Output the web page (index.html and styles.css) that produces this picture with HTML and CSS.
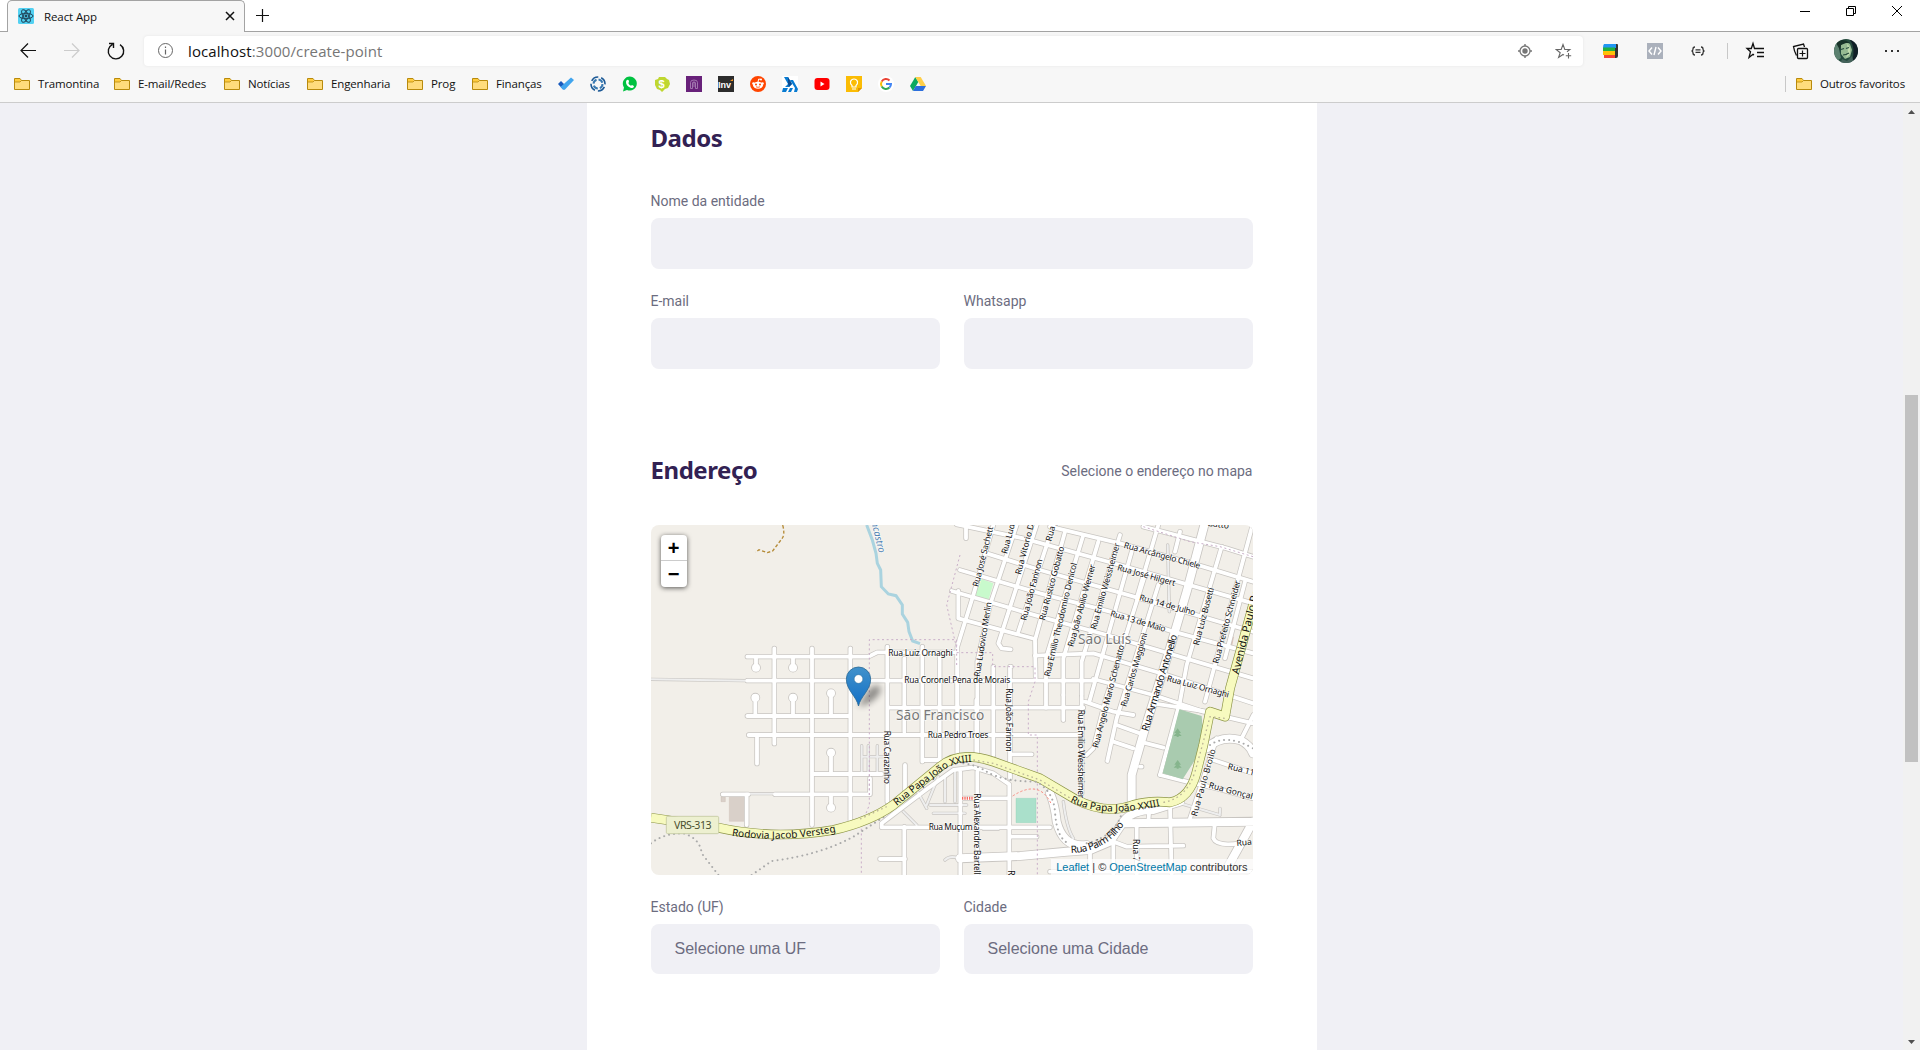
FILE: index.html
```html
<!DOCTYPE html>
<html lang="pt-BR">
<head>
<meta charset="utf-8">
<title>React App</title>
<link rel="stylesheet" href="styles.css">
</head>
<body>
<svg class="defs" aria-hidden="true">
  <symbol id="folder" viewBox="0 0 16 12"><path d="M.5 11.500V.5H6l1.500 2h8v9z" fill="#ffdc7c" stroke="#b88a0c"/><path d="M1 1h4.700l1.200 2L6 4H1z" fill="#ffcb3d"/><path d="M.5 4H6l1.500-1.500" fill="none" stroke="#b88a0c" stroke-width=".8"/></symbol>
</svg>
<header class="browser">
  <div class="tabs">
    <div class="tab">
      <svg width="16" height="16" viewBox="0 0 16 16"><rect width="16" height="16" rx="1.500" fill="#53d1f2"/><g fill="none" stroke="#20455a" stroke-width="1"><ellipse cx="8" cy="8" rx="7" ry="2.700"/><ellipse cx="8" cy="8" rx="7" ry="2.700" transform="rotate(60 8 8)"/><ellipse cx="8" cy="8" rx="7" ry="2.700" transform="rotate(120 8 8)"/></g><circle cx="8" cy="8" r="1.400" fill="#20455a"/></svg>
      <span class="tab-title">React App</span>
      <svg class="tab-close" width="10" height="10" viewBox="0 0 10 10"><path d="M1 1l8 8M9 1L1 9" stroke="#111" stroke-width="1.500"/></svg>
    </div>
    <svg class="newtab" width="13" height="13" viewBox="0 0 13 13"><path d="M6.500 0v13M0 6.500h13" stroke="#111" stroke-width="1.200"/></svg>
    <div class="window">
      <svg width="46" height="22" viewBox="0 0 46 22"><path d="M18 11.500h10" stroke="#000"/></svg>
      <svg width="46" height="22" viewBox="0 0 46 22"><path d="M18.500 8.500h7v7h-7zM20.500 8V6.500h7v7H26" fill="none" stroke="#000"/></svg>
      <svg width="46" height="22" viewBox="0 0 46 22"><path d="M18 6l10 10M28 6L18 16" stroke="#000"/></svg>
    </div>
  </div>
  <div class="toolbar">
    <svg class="nav" viewBox="0 0 44 30"><path d="M30 14.500H15M22 7.500l-7 7 7 7" fill="none" stroke="#111" stroke-width="1.200"/></svg>
    <svg class="nav" viewBox="0 0 44 30"><path d="M14 14.500h15M22 7.500l7 7-7 7" fill="none" stroke="#ccc" stroke-width="1.200"/></svg>
    <svg class="nav" viewBox="0 0 44 30"><path d="M18.500 8.300a7.700 7.700 0 1 0 7.500.3M15 7.500h4.500V12" fill="none" stroke="#111" stroke-width="1.400"/></svg>
    <div class="address">
      <svg width="16" height="16" viewBox="0 0 16 16"><circle cx="8.500" cy="7.500" r="7" fill="none" stroke="#666"/><path d="M8.500 6.500v5M8.500 3.500v1.400" stroke="#666" stroke-width="1.200"/></svg>
      <span class="url"><b>localhost</b>:3000/create-point</span>
      <svg class="locate" width="16" height="16" viewBox="0 0 16 16"><circle cx="8" cy="8" r="5" fill="none" stroke="#777" stroke-width="1.300"/><circle cx="8" cy="8" r="2.700" fill="#777"/><path d="M8 1v2M8 13v2M1 8h2M13 8h2" stroke="#777" stroke-width="1.400"/></svg>
      <svg width="18" height="16" viewBox="0 0 18 16"><path d="M12 8.700L14.800 6.500H9.800L8 1.500 6.200 6.500H1.200l4 3.200L3.600 14.500 8 11.500l1 .6M13.500 10v5.500M10.800 12.800h5.400" fill="none" stroke="#666" stroke-width="1.100"/></svg>
    </div>
    <div class="tools">
      <svg viewBox="0 0 45 30"><path d="M27 8h3q1 0 1 1v11q0 2-2 2h-2z" fill="#333"/><path d="M17 8h12v4H16q0-3 1-4z" fill="#2196f3"/><path d="M16 11.500h12V15H16z" fill="#1fb141"/><path d="M16 15h12v4H16z" fill="#ffc107"/><path d="M17 19h11v3H17z" fill="#f44336"/></svg>
      <svg viewBox="0 0 45 30"><path d="M15 7h16v16H15z" fill="#abb1bc"/><path d="M20 11.500L17 15l3 3.500M26 11.500l3 3.500-3 3.500M24 11l-2 8" fill="none" stroke="#fff" stroke-width="1.400"/></svg>
      <svg viewBox="0 0 45 30"><path d="M18 11q-2 0-2 2t-1.500 2q1.500 0 1.500 2t2 2M24 11q2 0 2 2t1.500 2q-1.500 0-1.500 2t-2 2" fill="none" stroke="#333" stroke-width="1.300"/><path d="M18.500 13.800h5M18.500 16.300h5" stroke="#333" stroke-width="1.300"/></svg>
      <i class="rule"></i>
      <svg viewBox="0 0 45 30"><path d="M24 12.500h-2.500L20 7.500l-1.700 5H14l3.500 3.200L16 21.500l4-3.200 1 .6M23 12.500h8M24 16.500h7M24 20.500h7" fill="none" stroke="#111" stroke-width="1.300"/></svg>
      <svg viewBox="0 0 45 30"><path d="M18.500 19.500q-2.500-5-3-9l10-2.500 1 3" fill="none" stroke="#111" stroke-width="1.300"/><rect x="19.500" y="12.500" width="10" height="10" rx="1" fill="#f7f7f7" stroke="#111" stroke-width="1.300"/><path d="M24.500 14.500v6M21.500 17.500h6" stroke="#111" stroke-width="1.200"/></svg>
      <svg viewBox="0 0 45 30"><defs><clipPath id="av"><circle cx="23" cy="15" r="12"/></clipPath></defs><g clip-path="url(#av)"><path d="M11 3h24v24H11z" fill="#254b3e"/><path d="M11 3h7l-2 10 2 9-7 5z" fill="#5c8170"/><path d="M18 9q4-5 9-1l2 6-2 7-5 2-4-5z" fill="#96ba92"/><path d="M24 8q4 2 3 10l-4 4 2-6z" fill="#c0dbae"/><path d="M18 13.500l3-1M23 12.500l3-1M20 19q3 0 6-2" stroke="#284d3e" stroke-width="1.200"/><path d="M27 4q6 8 2 21h6V3z" fill="#111f27"/><path d="M13 7q6-6 14 0l-4 0-5 2-1 5z" fill="#183329"/><path d="M19 23l5 2 5-5 2 8H17z" fill="#45635b"/></g></svg>
      <svg viewBox="0 0 45 30"><path d="M17 14h2v2h-2zM23 14h2v2h-2zM29 14h2v2h-2z" fill="#333"/></svg>
    </div>
  </div>
  <div class="bookmarks">
    <span class="bm"><svg width="16" height="12"><use href="#folder"/></svg>Tramontina</span>
    <span class="bm"><svg width="16" height="12"><use href="#folder"/></svg>E-mail/Redes</span>
    <span class="bm"><svg width="16" height="12"><use href="#folder"/></svg>Notícias</span>
    <span class="bm"><svg width="16" height="12"><use href="#folder"/></svg>Engenharia</span>
    <span class="bm"><svg width="16" height="12"><use href="#folder"/></svg>Prog</span>
    <span class="bm"><svg width="16" height="12"><use href="#folder"/></svg>Finanças</span>
    <svg viewBox="0 0 16 16"><path d="M0 8l3-3 5 5-3 3.500z" fill="#185abd"/><path d="M5 13.500L2.500 11 13 1.500l3 2.500-9 9.500q-1 .8-2 0z" fill="#41a5ee"/></svg>
    <svg viewBox="0 0 16 16"><circle cx="8" cy="8" r="7" fill="none" stroke="#1d5a96" stroke-width="1.600" stroke-dasharray="8 3" transform="rotate(25 8 8)"/><circle cx="8" cy="8" r="4.500" fill="none" stroke="#397ab2" stroke-width="2" stroke-dasharray="5 2.070"/></svg>
    <svg viewBox="0 0 16 16"><path d="M1 15.500l1-4A7 7 0 1 1 5 14z" fill="#00c241"/><path d="M5 4q2-1 2 2l-.7 1Q7 9 9 9.700L10 9q2 .6 2 1.500Q11 13 8 11.500 4 9.500 4 6q0-1.500 1-2z" fill="#fff"/></svg>
    <svg viewBox="0 0 16 16"><path d="M1 4l3-1 1-2h6l2 2 2 1 1 4-2 4-3 1-3 3-2-2-3-1-2-4z" fill="#bfd730"/><text x="4.500" y="11.500" class="dollar">$</text></svg>
    <svg viewBox="0 0 16 16"><path d="M0 0h16v16H0z" fill="#68217a"/><path d="M4.500 12.500V6.500q0-2.500 3.500-2.500t3.500 2.500v6h-2V7q0-1-1.500-1T6.500 7v5.500zM8 6v5" fill="none" stroke="#b08cbb" stroke-width=".8"/></svg>
    <svg viewBox="0 0 16 16"><path d="M0 0h16v16H0z" fill="#2c2c2c"/><text x="0" y="12" class="inv">Inv</text><path d="M12 5l3-2v2z" fill="#f7931e"/></svg>
    <svg viewBox="0 0 16 16"><circle cx="8" cy="8" r="8" fill="#ff4500"/><ellipse cx="8" cy="9.300" rx="5" ry="3.500" fill="#fff"/><circle cx="3.500" cy="7.500" r="1.300" fill="#fff"/><circle cx="12.500" cy="7.500" r="1.300" fill="#fff"/><circle cx="11" cy="3.500" r="1" fill="#fff"/><path d="M8 6l.7-3 2.300.5" stroke="#fff" fill="none"/><circle cx="6" cy="8.500" r="1" fill="#ff4500"/><circle cx="10" cy="8.500" r="1" fill="#ff4500"/><path d="M6 10.800q2 1 4 0" fill="none" stroke="#ff4500" stroke-width=".8"/></svg>
    <svg viewBox="0 0 16 16"><path d="M0 0h16v16H0z" fill="#fff"/><path d="M2 1h4l4 7-3 3H3l3-3zM8 4h3l5 9-1 3h-3l1-4zM1 12h5l-2 4H0zM8 12h3l-2 4H6z" fill="#087bd1"/><path d="M6 1l4 7-3 3-1-3z" fill="#0b4b91"/></svg>
    <svg viewBox="0 0 16 16"><rect x=".5" y="2" width="15" height="12" rx="3" fill="#f00"/><path d="M6.500 5.500v5l4-2.500z" fill="#fff"/></svg>
    <svg viewBox="0 0 16 16"><path d="M0 0h16v12l-4 4H0z" fill="#fbbc04"/><path d="M12 16v-4h4z" fill="#e09500"/><path d="M6 11V9.500Q4 8 4.500 5.500 5.500 3 8 3t3.500 2.500Q12 8 10 9.500V11zM6 13h4" fill="none" stroke="#fff" stroke-width="1.200"/></svg>
    <svg viewBox="0 0 16 16"><circle cx="8" cy="8" r="8" fill="#fff"/><g fill="none" stroke-width="2"><path d="M3.700 5.500A5 5 0 0 1 11.500 4.500" stroke="#ea4335"/><path d="M3.700 5.500a5 5 0 0 0 0 5" stroke="#fbbc05"/><path d="M3.700 10.500a5 5 0 0 0 7.800 1" stroke="#34a853"/><path d="M11.500 11.500A5 5 0 0 0 13 8H8" stroke="#4285f4"/></g></svg>
    <svg viewBox="0 0 16 16"><path d="M5.300 1L0 10l3 5 5.300-9z" fill="#0da960"/><path d="M5.300 1h5.400L16 10h-5.300z" fill="#ffcf48"/><path d="M5.700 10H16l-3 5H3z" fill="#2d6fdd"/></svg>
    <div class="others"><i class="rule"></i><span class="bm"><svg width="16" height="12"><use href="#folder"/></svg>Outros favoritos</span></div>
  </div>
</header>
<div class="viewport">
  <main class="page">
    <form class="form">
      <div class="legend"><h2>Dados</h2></div>
      <div class="field"><label>Nome da entidade</label><div class="input"></div></div>
      <div class="row">
        <div class="field"><label>E-mail</label><div class="input"></div></div>
        <div class="field"><label>Whatsapp</label><div class="input"></div></div>
      </div>
      <div class="legend second"><h2>Endereço</h2><span class="hint">Selecione o endereço no mapa</span></div>
      <div class="map">
        <svg class="tiles" viewBox="33 30 1806 1050">
          <defs>
            <g id="thin"><path d="M33 493L322 497M318 836H405M1583 90L1588 290M665 692V770M685 692V770M712 692V770M665 725H735M725 925L830 825 860 880M860 870L895 785M870 870H980M880 895H975M790 890L830 930M915 785V860M945 770V860M1075 943H1030M915 1035q15-15 40-5M1270 860q10 80 30 110M1620 865L1740 900M1740 880V895"/></g>
            <g id="minor">
              <path d="M322 425H685L712 412H950M322 497H1360M403 400V686M516 400V930M631 400V915M322 603H631M326 660H1320M351 660V746M516 777H725M405 838H690V790M248 838H325M320 838V930M348 425V458M459 425V458M346 548V603M459 548V603M573 535V603M573 713V777M573 838V878"/>
              <path d="M742 395V860M793 430V650M847 395V740M899 425V735M952 410V725M742 578H1330M795 750V830M847 735H900M720 1032H795M793 935V1080M725 937H1230M725 937V925L850 830 940 765 1000 757 1060 775 1108 808V1080M961 770V1080M1012 770V1080M965 850H1100M1113 965H1190M960 1030H1110"/>
              <path d="M1060 455V720M1110 455V790M1113 718H1175M1110 455H1113M1009 555V720M1270 540V615M1325 545V835M1335 560L1420 590 1480 600"/>
              <path d="M1060 30L1000 240 952 395V590M1130 30L1050 270 1012 440V720M1190 30L1075 385 1085 400 1112 403M1240 30L1135 350M1275 50L1185 375 1187 490M1330 60L1218 430V578M1375 80L1270 430V540M1440 60L1325 440V540M1475 110L1348 560M1512 190L1395 560 1360 700 1340 720M1555 210L1430 610 1402 738M1555 30L1490 250M1620 50L1605 110M1745 95L1640 450 1620 560 1560 780M1835 40L1695 560M1815 200L1755 430"/>
              <path d="M950 28L1150 70 1440 150 1839 265M1230 35L1440 85 1690 155 1839 200M1510 35L1760 100 1839 125M1040 115L1200 165 1500 250 1839 350M960 165L1200 235 1410 290 1600 350 1839 415M935 228L1200 305 1400 360 1839 490M955 310L1185 372M955 228V310M1185 422L1360 415 1580 480 1839 565M1360 492L1540 540 1690 590 1839 625M978 30V70"/>
              <path d="M1430 630L1500 655M1420 680L1480 700M1500 680L1570 698M1540 565L1700 590M1560 780L1640 800 1730 820 1839 850M1720 735L1839 775M1840 600L1800 680M1730 670L1650 910M1725 920L1720 970Q1730 995 1800 985M1590 870L1595 1080M1490 925V1080M1420 980L1460 995 1630 992M1350 1000V1080M1420 980V1080M1230 1070H1839M1530 860L1525 920M1500 755H1505"/>
            </g>
            <g id="major"><path d="M1693 30L1640 230 1590 400 1515 640 1475 780 1475 860M1450 925L1839 920M960 1030L1140 1023 1280 1010 1350 1005 1410 980 1450 920Q1475 885 1540 885L1620 860M1230 835Q1245 870 1250 920 1270 1000 1340 990M1700 700Q1740 660 1800 675 1830 690 1839 715M1839 920L1750 1080"/></g>
            <path id="highway" d="M33 908L235 938Q400 975 580 945 690 920 760 870L900 755Q960 705 1060 740L1200 790 1310 855Q1400 900 1480 870 1530 855 1590 862 1650 850 1670 770L1690 690 1710 590 1755 605 1770 520 1839 270"/>
            <path id="roundabouts" d="M348 458h.1M459 458h.1M346 548h.1M459 548h.1M573 535h.1M573 713h.1M573 878h.1"/>
            <path id="rodovia" d="M275 962Q420 985 590 950"/>
            <path id="papa1" d="M770 873Q860 800 915 762 955 740 1000 741"/>
            <path id="papa2" d="M1290 860Q1390 912 1565 872"/>
            <path id="paim" d="M1293 1014Q1400 1010 1452 928"/>
            <linearGradient id="pin" x1="0" y1="0" x2="0" y2="1"><stop stop-color="#4292cb"/><stop offset="1" stop-color="#126fc6"/></linearGradient>
            <filter id="soft" x="-50%" y="-50%" width="200%" height="200%"><feGaussianBlur stdDeviation="9"/></filter>
          </defs>
          <path d="M33 30h1806v1050H33z" fill="#f2efe9"/>
          <path d="M268 843h46v76h-46zM243 845h13v15h-13z" fill="#d9d0c9" stroke="#c4b5ab"/>
          <path d="M1018 190L1060 205 1045 257 1000 242z" fill="#c8facc"/>
          <path d="M1128 850h60v73h-60z" fill="#aae0cb" stroke="#8bcfb2"/>
          <path d="M1770 365h12l-5 25h-12z" fill="#dcc2b8"/>
          <g class="casing"><use href="#thin" stroke-width="10"/><use href="#minor" stroke-width="16"/><use href="#major" stroke-width="29"/><use href="#roundabouts" stroke-width="29"/></g>
          <g class="road"><use href="#thin" stroke-width="6" stroke="#eee"/><use href="#minor" stroke-width="11.500"/><use href="#major" stroke-width="24"/><use href="#roundabouts" stroke-width="24"/></g>
          <path d="M1618 583L1685 603 1687 625 1692 650 1665 735 1628 793 1568 775z" fill="#a9cbaf"/><path d="M1613 640l-10 14h6l-8 9h9v3h6v-3h9l-8-9h6zM1613 735l-10 14h6l-8 9h9v3h6v-3h9l-8-9h6z" fill="#86b58d"/>
          <path d="M680 30L697 75 708 115 712 145 722 165 724 215 745 237 768 242 787 270V297L803 322 807 350 818 378 840 386" fill="none" stroke="#aad3df" stroke-width="9"/>
          <path d="M428 30q8 30-3 42L398 108l-16 5-25-9-10 8" fill="none" stroke="#b58b38" stroke-width="4" stroke-dasharray="10 6"/>
          <g class="border"><path d="M688 840V374H950V450M688 750V870L664 930V1080M960 120L920 270 950 400M950 413H1058V455H1185V500L1165 560V660H1192V1080M1510 35L1650 80 1740 95 1839 125M1780 470L1755 590"/></g>
          <path d="M33 985Q70 955 130 955 180 970 185 1015L235 1080M335 1080L395 1038Q540 1020 640 965L740 900" class="dots"/>
          <g fill="none" stroke-linecap="butt" stroke-linejoin="round"><use href="#highway" stroke="#8d9548" stroke-width="29"/><use href="#highway" stroke="#f7fabf" stroke-width="25"/></g>
          <path d="M660 912L740 875M1000 735L1060 745 1200 795 1300 855M1570 862Q1640 850 1665 770L1690 680 1710 605 1755 610" class="railtrack"/>
          <path d="M970 745Q1010 750 1040 770 1090 800 1190 800 1240 830 1245 890 1250 970 1285 985M1340 985Q1440 960 1450 870M1710 690Q1760 655 1839 700" class="dots"/>
          <path d="M1118 843Q1200 790 1235 870" fill="none" stroke="#f98a80" stroke-width="3" stroke-dasharray="7 6"/>
          <path d="M966 850h34" stroke="#f36c63" stroke-width="9" stroke-dasharray="4 3"/>
          <rect x="79" y="904" width="157" height="52" rx="4" fill="#edf0d0" stroke="#b9c094" stroke-width="2"/>
          <g class="label">
            <text transform="translate(745 423)" textLength="193">Rua Luiz Ornaghi</text>
            <text transform="translate(793 504)" textLength="318">Rua Coronel Pena de Morais</text>
            <text transform="translate(863 668)" textLength="182">Rua Pedro Troes</text>
            <text transform="translate(866 946)" textLength="132">Rua Muçum</text>
            <text transform="translate(732 647) rotate(90)" textLength="160">Rua Carazinho</text>
            <text transform="translate(1099 520) rotate(90)" textLength="190">Rua João Farinon</text>
            <text transform="translate(1314 584) rotate(90)" textLength="266">Rua Emilio Weissheimer</text>
            <text transform="translate(1002 835) rotate(90)" textLength="258">Rua Alexandre Bartelle</text>
            <text transform="translate(1479 972) rotate(90)">Rua 7</text>
            <text transform="translate(1104 1066) rotate(90)">Rua</text>
            <text transform="translate(1015 217) rotate(-76)" textLength="186">Rua José Sachett</text>
            <text transform="translate(1101 118) rotate(-75)" textLength="226">Rua Ludovico Merlin</text>
            <text transform="translate(1142 180) rotate(-75)">Rua Vitorio Dariva</text>
            <text transform="translate(1234 80) rotate(-75)">Rua João</text>
            <text transform="translate(1159 318) rotate(-75)" textLength="190">Rua João Farinon</text>
            <text transform="translate(1214 317) rotate(-75)" textLength="228">Rua Rustico Gobatto</text>
            <text transform="translate(1229 486) rotate(-76.500)" textLength="350">Rua Emilio Theodomiro Denicol</text>
            <text transform="translate(1300 397) rotate(-75)" textLength="255">Rua João Abilio Werner</text>
            <text transform="translate(1368 345) rotate(-74.500)" textLength="268">Rua Emilio Weissheimer</text>
            <text transform="translate(1019 486) rotate(-81)" textLength="226">Rua Ludovico Merlin</text>
            <text transform="translate(1374 700) rotate(-75.600)" textLength="318">Rua Angelo Mario Schenatto</text>
            <text transform="translate(1459 577) rotate(-74)" textLength="229">Rua Carlos Maggioni</text>
            <text class="mid" transform="translate(1524 650) rotate(-73)" textLength="301">Rua Armando Antonello</text>
            <text transform="translate(1676 392) rotate(-75)" textLength="178">Rua Luiz Busetti</text>
            <text transform="translate(1735 447) rotate(-75)" textLength="257">Rua Prefeito Schneider</text>
            <text class="big" transform="translate(1796 479) rotate(-76)">Avenida Paulo Renner</text>
            <text transform="translate(1450 98) rotate(15.500)" textLength="237">Rua Arcângelo Chiele</text>
            <text transform="translate(1430 165) rotate(15.500)" textLength="180">Rua José Hilgert</text>
            <text transform="translate(1496 255) rotate(15.500)" textLength="174">Rua 14 de Julho</text>
            <text transform="translate(1409 303) rotate(16)" textLength="172">Rua 13 de Maio</text>
            <text transform="translate(1579 498) rotate(15)" textLength="192">Rua Luiz Ornaghi</text>
            <text transform="translate(1700 32) rotate(8)">Gatto</text>
            <text transform="translate(1670 905) rotate(-74)" textLength="208">Rua Paulo Broilo</text>
            <text transform="translate(1762 762) rotate(14)">Rua 11</text>
            <text transform="translate(1705 818) rotate(15)">Rua Gonçalves</text>
            <text transform="translate(1790 993) rotate(-5)">Rua</text>
            <text class="mid"><textPath href="#paim" textLength="188">Rua Paim Filho</textPath></text>
            <text class="mid"><textPath href="#papa1" textLength="266">Rua Papa João XXIII</textPath></text>
            <text class="mid"><textPath href="#papa2" textLength="276">Rua Papa João XXIII</textPath></text>
            <text class="mid"><textPath href="#rodovia" textLength="315">Rodovia Jacob Versteg</textPath></text>
            <text class="big ref" transform="translate(102 941)" textLength="113">VRS-313</text>
            <text class="place" transform="translate(768 616)" textLength="265">São Francisco</text>
            <text class="place" transform="translate(1314 386)" textLength="160">São Luís</text>
            <text class="water" transform="translate(690 6) rotate(76)">ancastro</text>
          </g>
          <path d="M655 572L685 525Q715 500 722 520 722 550 670 572z" fill="#000" opacity=".4" filter="url(#soft)"/>
          <path d="M655.500 573C650 545 619 525 619 492.500a36.500 36.500 0 0 1 73 0C692 525 661 545 655.500 573z" fill="url(#pin)" stroke="#2e6c97" stroke-width="2.500"/>
          <circle cx="655.500" cy="492" r="13" fill="#fff" stroke="#2e6c97" stroke-width="1.500"/>
        </svg>
        <div class="zoom"><span>+</span><span>−</span></div>
        <div class="credit"><a>Leaflet</a> | © <a>OpenStreetMap</a> contributors</div>
      </div>
      <div class="row">
        <div class="field"><label>Estado (UF)</label><div class="input select">Selecione uma UF</div></div>
        <div class="field"><label>Cidade</label><div class="input select">Selecione uma Cidade</div></div>
      </div>
    </form>
  </main>
  <aside class="scrollbar">
    <svg width="17" height="17" viewBox="0 0 17 17"><path d="M5 11l3.500-4 3.500 4z" fill="#505050"/></svg>
    <div class="thumb"></div>
    <svg class="down" width="17" height="17" viewBox="0 0 17 17"><path d="M5 7l3.500 4L12 7z" fill="#505050"/></svg>
  </aside>
</div>
</body>
</html>
```
FILE: styles.css
```css
* { box-sizing: border-box; }
body { margin: 0; width: 1920px; height: 1050px; overflow: hidden; display: flex; flex-direction: column; font-family: "Open Sans", "Noto Sans", sans-serif; color: #111; }
svg { display: block; flex: none; }
.defs { width: 0; height: 0; position: absolute; }
.browser { height: 103px; background: #f7f7f7; border-bottom: 1px solid #ccc; flex: none; }

.tabs { height: 32px; background: #fff; border-bottom: 1px solid #a3a3a3; display: flex; padding-left: 7px; }
.tab { width: 238px; height: 32px; border: 1px solid #a3a3a3; border-bottom: 0; border-radius: 5px 5px 0 0; background: #f7f7f7; display: flex; align-items: center; padding: 0 9px 1px 10px; }
.tab-title { font-size: 11.500px; letter-spacing: -.1px; margin-left: 10px; flex: 1; }
.newtab { margin: 9px 0 0 11px; }
.window { margin-left: auto; display: flex; }

.toolbar { height: 37px; padding: 4px 0 0 6px; display: flex; }
.nav { width: 44px; height: 30px; }
.address { width: 1439px; height: 30px; margin-left: 6px; background: #fff; border-radius: 4px; box-shadow: 0 0 3px #e5e5e5; display: flex; align-items: center; padding: 0 10px 0 13px; }
.url { font-size: 15px; letter-spacing: .1px; margin-left: 15px; flex: 1; color: #767676; }
.url b { font-weight: 400; color: #111; }
.locate { margin-right: 22px; }
.tools { height: 30px; display: flex; align-items: center; margin-left: 4px; }
.tools svg { width: 45px; height: 30px; }
.rule { width: 1px; height: 16px; background: #c8c8c8; margin: 0 5px; }

.bookmarks { display: grid; grid-template-columns: 100px 110px 83px 100px 65px 86px repeat(12, 32px) 1fr; align-items: center; height: 30px; padding-left: 14px; }
.bookmarks > svg { width: 16px; height: 16px; }
.bm { display: flex; align-items: center; gap: 8px; font-size: 11.500px; line-height: 16px; letter-spacing: -.13px; white-space: nowrap; }
.others { display: flex; justify-content: flex-end; align-items: center; padding-right: 15px; }
.others .rule { margin: 0 10px 0 0; }
.dollar { font: bold 11px "Liberation Sans", sans-serif; fill: #fff; }
.inv { font: bold 9px "Liberation Sans", sans-serif; fill: #fff; }

.viewport { flex: 1; display: flex; background: #f0f0f5; min-height: 0; }
.page { flex: 1; display: flex; justify-content: center; }
.form { width: 730px; background: #fff; padding: 19px 64px 0; }
.legend { height: 32px; margin-bottom: 39px; display: flex; justify-content: space-between; align-items: center; font: 14px Roboto, sans-serif; color: #6c6c80; }
.legend.second { margin-top: 85px; }
.hint { padding-top: 1px; }
h2 { margin: 0; font: bold 24px/32px "Noto Sans", sans-serif; letter-spacing: -.45px; color: #322153; }
.row { display: grid; grid-template-columns: 1fr 1fr; gap: 24px; margin-top: 24px; }
.field label { display: block; font: 14px/16px Roboto, sans-serif; color: #6c6c80; margin-bottom: 9px; }
.input { height: 51px; border-radius: 8px; background: #f0f0f5; }
.select { height: 50px; padding-left: 24px; font: 16px/50px "Liberation Sans", sans-serif; color: #6c6c80; }

.map { height: 350px; border-radius: 8px; overflow: hidden; position: relative; }
.tiles { width: 602px; height: 350px; }
.casing, .road { fill: none; stroke-linecap: round; stroke-linejoin: round; }
.casing { stroke: #c8c5c1; }
.road { stroke: #fff; }
.border path { fill: none; stroke: #c9aec8; stroke-width: 3; stroke-dasharray: 6 8; }
.dots { fill: none; stroke: #aaa; stroke-width: 6; stroke-linecap: round; stroke-dasharray: .1 15; }
.railtrack { fill: none; stroke: #bbb697; stroke-width: 4; stroke-dasharray: 5 9; }
.label text { font: 25.500px "Noto Sans", sans-serif; fill: #111; stroke: #fff; stroke-width: 4px; stroke-opacity: .7; paint-order: stroke; }
.label .mid { font-size: 30px; stroke-opacity: 0; }
.label .big { font-size: 32px; stroke-opacity: 0; }
.label .ref { fill: #4b5130; }
.label .place { font-size: 41px; fill: #777; }
.label .water { font-size: 29px; font-style: italic; fill: #4d80b3; }
.zoom { position: absolute; left: 10px; top: 10px; width: 26px; border-radius: 4px; background: #fff; box-shadow: 0 1px 5px rgba(0,0,0,.65); font: bold 20px/26px "Liberation Sans", sans-serif; text-align: center; color: #000; }
.zoom span { display: block; height: 26px; }
.zoom span:first-child { border-bottom: 1px solid #ccc; }
.credit { position: absolute; right: 0; bottom: 0; padding: 0 5px; background: rgba(255,255,255,.7); font: 11px/16px "Liberation Sans", sans-serif; color: #333; white-space: nowrap; }
.credit a { color: #0078a8; }

.scrollbar { width: 17px; background: #f1f1f1; display: flex; flex-direction: column; align-items: center; }
.thumb { width: 13px; height: 367px; margin-top: 275px; background: #c1c1c1; }
.down { margin-top: auto; }
```
